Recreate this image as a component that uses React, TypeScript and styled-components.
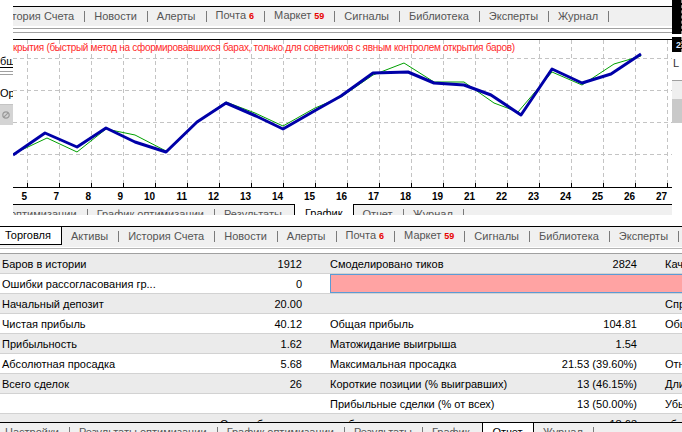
import React from "react";
import styled, { createGlobalStyle } from "styled-components";

const GlobalStyle = createGlobalStyle`
  html, body {
    margin: 0;
    padding: 0;
    background: #fff;
    overflow: hidden;
  }
  body {
    font-family: "Liberation Sans", Arial, sans-serif;
    font-size: 11px;
    color: #000;
  }
`;

// data

type TabDef = { label: string; badge?: string };

const terminalTabs: TabDef[] = [
  { label: "Торговля" },
  { label: "Активы" },
  { label: "История Счета" },
  { label: "Новости" },
  { label: "Алерты" },
  { label: "Почта", badge: "6" },
  { label: "Маркет", badge: "59" },
  { label: "Сигналы" },
  { label: "Библиотека" },
  { label: "Эксперты" },
  { label: "Журнал" },
];

const testerTabs: TabDef[] = [
  { label: "Настройки" },
  { label: "Результаты оптимизации" },
  { label: "График оптимизации" },
  { label: "Результаты" },
  { label: "График" },
  { label: "Отчет" },
  { label: "Журнал" },
];

type ReportRow = {
  l1: string;
  v1: string;
  l2?: string;
  v2?: string;
  l3?: string;
  quality?: boolean;
};

const report: ReportRow[] = [
  { l1: "Баров в истории", v1: "1912", l2: "Смоделировано тиков", v2: "2824", l3: "Качество моделирования" },
  { l1: "Ошибки рассогласования гр...", v1: "0", quality: true },
  { l1: "Начальный депозит", v1: "20.00", l3: "Спред" },
  { l1: "Чистая прибыль", v1: "40.12", l2: "Общая прибыль", v2: "104.81", l3: "Общий убыток" },
  { l1: "Прибыльность", v1: "1.62", l2: "Матожидание выигрыша", v2: "1.54" },
  { l1: "Абсолютная просадка", v1: "5.68", l2: "Максимальная просадка", v2: "21.53 (39.60%)", l3: "Относительная просадка" },
  { l1: "Всего сделок", v1: "26", l2: "Короткие позиции (% выигравших)", v2: "13 (46.15%)", l3: "Длинные позиции" },
  { l1: "", v1: "", l2: "Прибыльные сделки (% от всех)", v2: "13 (50.00%)", l3: "Убыточные сделки" },
  { l1: "", v1: "Самая большая", l2: "прибыльная сделка", v2: "18.63", l3: "убыточная сделка" },
];

const gridX = Array.from({ length: 21 }, (_, i) => 14 + 32 * i);
const gridY = [18, 50, 82, 114];
const axisLabels = ["5", "7", "8", "9", "10", "11", "12", "13", "14", "15", "16", "17", "18", "19", "21", "22", "23", "24", "25", "26", "27"];

const balance = [
  [0, 115], [32, 93], [64, 107], [93, 88], [122, 102], [153, 112], [184, 82], [213, 63],
  [243, 76], [270, 89], [303, 70], [328, 56], [360, 33], [395, 32], [421, 43], [451, 45],
  [478, 55], [508, 75], [539, 29], [569, 43], [598, 34], [628, 14],
];

const equity = [
  [0, 114], [34, 98], [64, 112], [93, 89], [122, 95], [153, 111], [184, 82], [213, 62],
  [242, 73], [270, 86], [302, 68], [328, 57], [360, 35], [391, 23], [421, 42], [451, 42],
  [481, 63], [505, 72], [539, 32], [569, 45], [601, 24], [628, 16],
];

const toPoints = (pts: number[][]) => pts.map((p) => p.join(",")).join(" ");

// layout

const Screen = styled.div`
  width: 682px;
  height: 432px;
  display: flex;
  flex-direction: column;
  overflow: hidden;
  background: #fff;
`;

const TopArea = styled.div`
  flex: none;
  height: 215px;
  display: grid;
  grid-template-columns: 13px 659px 10px;
`;

const MainColumn = styled.div`
  display: flex;
  flex-direction: column;
  padding-top: 6px;
  min-width: 0;
`;

const Band = styled.div`
  flex: none;
  height: 14px;
  box-sizing: border-box;
  padding-top: 2px;
  border-bottom: 1px solid #000;
`;

const DoubleRule = styled.div<{ $gap?: number }>`
  height: ${(p) => p.$gap ?? 3}px;
  border-top: 1px solid #a0a0a0;
  border-bottom: 1px solid #a0a0a0;
`;

const Gap = styled.div<{ $h: number }>`
  flex: none;
  height: ${(p) => p.$h}px;
`;

// side slivers of the windows behind

const LeftSliver = styled.div`
  display: flex;
  flex-direction: column;
  padding-top: 56px;
  overflow: hidden;
`;

const SliverCaption = styled.div`
  height: 11px;
  line-height: 11px;
  white-space: nowrap;
  border-bottom: 1px solid #000;
`;

const SliverLabel = styled.div`
  margin-top: 13px;
  height: 11px;
  line-height: 11px;
  white-space: nowrap;
`;

const SliverButton = styled.div`
  margin-top: 5px;
  height: 20px;
  border-top: 1px solid #c4c4c4;
  background: #d4d4d4;
  display: flex;
  align-items: center;
  padding-left: 2px;
`;

const RightSliver = styled.div`
  display: flex;
  flex-direction: column;
  overflow: hidden;
`;

const BlackBlock = styled.div<{ $h: number }>`
  height: ${(p) => p.$h}px;
  background: #000;
  box-sizing: border-box;
  border-right: 1px dashed #8a8a8a;
  display: flex;
  justify-content: flex-end;
  align-items: center;
  color: #d8e8ff;
  font-size: 9px;
  font-weight: bold;
`;

const SliverText = styled.div`
  margin-top: 5px;
  height: 12px;
  line-height: 12px;
  white-space: nowrap;
  color: #333;
  padding-left: 1px;
  span {
    color: #5a78a8;
  }
`;

const SliverBlock = styled.div<{ $tone: string; $h: number; $line?: boolean }>`
  height: ${(p) => p.$h}px;
  background: ${(p) => p.$tone};
  border-top: ${(p) => (p.$line ? "1px solid #a0a0a0" : "none")};
`;

// tabs

const Strip = styled.div<{ $height: number }>`
  flex: none;
  height: ${(p) => p.$height}px;
  overflow: hidden;
`;

const TabRow = styled.div<{ $shift: number }>`
  display: flex;
  align-items: flex-start;
  height: 30px;
  box-sizing: border-box;
  margin-left: ${(p) => p.$shift}px;
  border-top: 1px solid #000;
  background: #f0f0f0;
`;

const Tab = styled.div<{ $active?: boolean; $open?: boolean; $down?: boolean; $sep?: boolean }>`
  flex: none;
  display: flex;
  align-items: center;
  height: ${(p) => (p.$open ? "19px" : "18px")};
  margin-top: ${(p) => (p.$open ? "-1px" : "0")};
  box-sizing: border-box;
  padding: ${(p) => (p.$active ? "0 10px" : p.$sep ? "0 0 0 9px" : "0 12px 0 9px")};
  background: ${(p) => (p.$active ? "#fff" : "transparent")};
  color: ${(p) => (p.$active ? "#000" : "#555")};
  border-left: ${(p) => (p.$active ? "1px solid #000" : "none")};
  border-right: ${(p) => (p.$active ? "1px solid #000" : "none")};
  border-bottom: ${(p) => (p.$down ? "1px solid #000" : "none")};
  white-space: nowrap;
`;

const TabText = styled.span`
  line-height: 13px;
`;

const Badge = styled.span`
  margin-left: 3px;
  color: #e80000;
  font-size: 9px;
  font-weight: bold;
`;

const Sep = styled.span`
  display: block;
  width: 1px;
  height: 11px;
  margin-left: 10px;
  background: #7a7a7a;
`;

type TabStripProps = {
  tabs: TabDef[];
  active: number;
  shift: number;
  height: number;
  open?: boolean;
  down?: boolean;
};

const TabStrip = ({ tabs, active, shift, height, open, down }: TabStripProps) => (
  <Strip $height={height}>
    <TabRow $shift={shift}>
      {tabs.map((t, i) => {
        const isActive = i === active;
        const sep = !isActive && i + 1 !== active;
        return (
          <Tab key={t.label + i} $active={isActive} $open={isActive && open} $down={isActive && down} $sep={sep}>
            <TabText>
              {t.label}
              {t.badge && <Badge>{t.badge}</Badge>}
            </TabText>
            {sep && <Sep />}
          </Tab>
        );
      })}
    </TabRow>
  </Strip>
);

// chart

const ChartPanel = styled.div`
  flex: none;
  height: 164px;
  position: relative;
  background: #fff;
  svg {
    display: block;
  }
`;

const ChartTitle = styled.div`
  position: absolute;
  top: 3px;
  left: 0;
  font-size: 10px;
  line-height: 10px;
  letter-spacing: -0.3px;
  color: #ff2a2a;
  white-space: nowrap;
`;

const Chart = () => (
  <ChartPanel>
    <svg width="659" height="164" viewBox="0 0 659 164">
      {gridX.map((x) => (
        <line key={"v" + x} x1={x + 0.5} y1={0} x2={x + 0.5} y2={147} stroke="#c4c4c4" strokeDasharray="4 3" />
      ))}
      {gridY.map((y) => (
        <line key={"h" + y} x1={0} y1={y + 0.5} x2={659} y2={y + 0.5} stroke="#c4c4c4" strokeDasharray="4 3" />
      ))}
      <line x1={0} y1={147.5} x2={659} y2={147.5} stroke="#000" />
      {gridX.map((x) => (
        <line key={"t" + x} x1={x + 0.5} y1={143} x2={x + 0.5} y2={147} stroke="#000" />
      ))}
      <polyline points={toPoints(equity)} fill="none" stroke="#00a000" strokeWidth={1} />
      <polyline points={toPoints(balance)} fill="none" stroke="#0000a8" strokeWidth={3} strokeLinejoin="round" />
      {gridX.map((x, i) => (
        <text
          key={"l" + x}
          x={x}
          y={160}
          textAnchor="end"
          fontFamily="Liberation Sans, Arial, sans-serif"
          fontSize="10"
          fontWeight="bold"
          fill="#000"
        >
          {axisLabels[i]}
        </text>
      ))}
    </svg>
    <ChartTitle>
      крытия (быстрый метод на сформировавшихся барах, только для советников с явным контролем открытия баров)
    </ChartTitle>
  </ChartPanel>
);

// report table

const Divider = styled.div`
  flex: none;
  height: 4px;
  margin-top: 1px;
  border-top: 1px solid #b4b4b4;
`;

const Table = styled.div`
  flex: 1;
  min-height: 0;
  overflow: hidden;
  border-top: 1px solid #a0a0a0;
`;

const Row = styled.div<{ $shade: boolean }>`
  display: grid;
  grid-template-columns: 225px 80px 25px 230px 80px 23px 1fr;
  align-items: center;
  height: 20px;
  box-sizing: border-box;
  border-bottom: 1px solid #d2d2d2;
  background: ${(p) => (p.$shade ? "#ebebeb" : "#fff")};
  white-space: nowrap;
`;

const Label = styled.div<{ $pad?: number }>`
  padding-left: ${(p) => p.$pad ?? 0}px;
  overflow: hidden;
`;

const Value = styled.div`
  display: flex;
  justify-content: flex-end;
  padding-right: 3px;
`;

const QualityBar = styled.div`
  grid-column: 4 / -1;
  align-self: stretch;
  background: #ffa3a3;
  border: 1px solid #5b9bd5;
  border-right: none;
`;

const ReportTable = () => (
  <Table>
    {report.map((r, i) => (
      <Row key={i} $shade={i % 2 === 0}>
        <Label $pad={2}>{r.l1}</Label>
        <Value>{r.v1}</Value>
        <span />
        {r.quality ? (
          <QualityBar />
        ) : (
          <>
            <Label>{r.l2}</Label>
            <Value>{r.v2}</Value>
            <span />
            <Label $pad={2}>{r.l3}</Label>
          </>
        )}
      </Row>
    ))}
  </Table>
);

const BlockIcon = () => (
  <svg width="8" height="8" viewBox="0 0 8 8">
    <circle cx="4" cy="4" r="3.2" fill="none" stroke="#9a9a9a" strokeWidth="1.2" />
    <line x1="1.8" y1="6.2" x2="6.2" y2="1.8" stroke="#9a9a9a" strokeWidth="1.2" />
  </svg>
);

export default function App() {
  return (
    <>
      <GlobalStyle />
      <Screen>
        <TopArea>
          <LeftSliver>
            <SliverCaption>бш</SliverCaption>
            <Gap $h={3} />
            <DoubleRule $gap={2} />
            <SliverLabel>Ор</SliverLabel>
            <SliverButton>
              <BlockIcon />
            </SliverButton>
          </LeftSliver>

          <MainColumn>
            <TabStrip tabs={terminalTabs} active={0} shift={-149} height={20} down />
            <Band>
              <DoubleRule />
            </Band>
            <Chart />
            <TabStrip tabs={testerTabs} active={4} shift={-147} height={11} open />
          </MainColumn>

          <RightSliver>
            <BlackBlock $h={34} />
            <Gap $h={3} />
            <BlackBlock $h={15}>2</BlackBlock>
            <SliverText>
              L <span>(</span>
            </SliverText>
            <Gap $h={11} />
            <SliverBlock $tone="#efefef" $h={18} $line />
            <SliverBlock $tone="#c9c9c9" $h={24} />
          </RightSliver>
        </TopArea>

        <Gap $h={11} />
        <TabStrip tabs={terminalTabs} active={0} shift={-6} height={21} down />
        <Divider />
        <ReportTable />
        <TabStrip tabs={testerTabs} active={5} shift={-4} height={10} />
      </Screen>
    </>
  );
}
